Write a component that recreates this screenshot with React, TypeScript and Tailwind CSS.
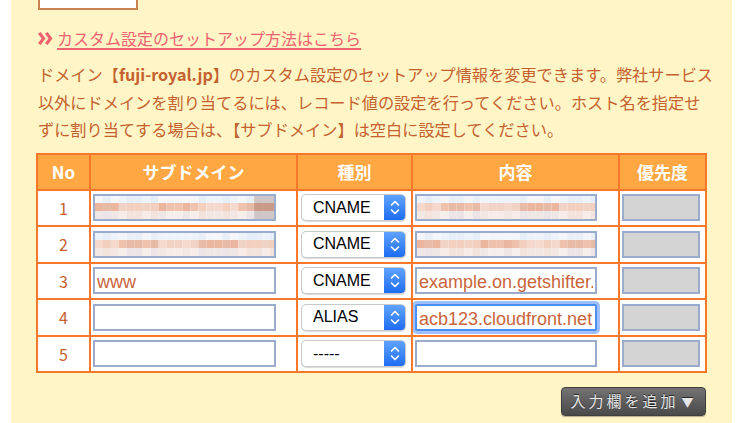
import React from "react";

const JP = { fontFamily: '"Noto Sans CJK JP", "Noto Sans", sans-serif' };

// pixelated (mosaic) blur used for the hidden values in rows 1 and 2
const mosaicColors = [
  ["#eef2fa", "#f3f5fb", "#e6eef9", "#f4f6fc", "#edf3fb", "#e9eef7"],
  ["#efc2ae", "#f3cfbf", "#eab6a0", "#f1d3c6", "#e8bba6", "#f4d9cc"],
  ["#f3e3dd", "#efe6e6", "#f7ece8", "#ece4e6", "#f2e7e2", "#f6eeea"],
];

function Mosaic({ seed, dark }: { seed: number; dark?: boolean }) {
  const cols = 23;
  const cells: React.ReactNode[] = [];
  for (let r = 0; r < 3; r++) {
    for (let c = 0; c < cols; c++) {
      let fill = mosaicColors[r][(c * 7 + seed * 3 + r * 5 + ((c * c) % 5)) % 6];
      if (dark && c >= cols - 3) fill = r === 1 ? "#c99a86" : "#cfc7c7";
      cells.push(<rect key={`${r}-${c}`} x={c * 8} y={r * 8 - 1} width={8} height={8} fill={fill} />);
    }
  }
  return (
    <svg width="100%" height="100%" viewBox="0 0 180 23" preserveAspectRatio="none" className="block">
      {cells}
    </svg>
  );
}

function TextBox({ value, focused, blur, seed, dark, width }: { value?: string; focused?: boolean; blur?: boolean; seed?: number; dark?: boolean; width: string }) {
  return (
    <div
      className={`${width} h-[27px] bg-white border-2 overflow-hidden ${
        focused ? "border-[#4b8ef5] shadow-[0_0_0_3px_rgba(80,140,250,0.55)] rounded-[2px]" : "border-[#9aabcb]"
      }`}
    >
      {blur ? (
        <Mosaic seed={seed ?? 0} dark={dark} />
      ) : (
        <input
          readOnly
          defaultValue={value}
          className="w-full h-full px-[2px] bg-transparent outline-none text-[18px] text-[#c9643a] leading-none"
          style={{ fontFamily: '"Liberation Sans", Arial, sans-serif' }}
        />
      )}
    </div>
  );
}

function SelectBox({ label }: { label: string }) {
  return (
    <div className="flex w-[105px] h-[27px] rounded-[5px] border border-[#c9c9c9] bg-white shadow-[0_1px_1px_rgba(0,0,0,0.15)] overflow-hidden">
      <div
        className="flex-1 flex items-center pl-[11px] text-[16px] text-black"
        style={{ fontFamily: '"Liberation Sans", Arial, sans-serif' }}
      >
        {label}
      </div>
      <div className="w-[21px] flex items-center justify-center bg-gradient-to-b from-[#5fa3ff] to-[#1c6cf2]">
        <svg width="10" height="17" viewBox="0 0 10 17" fill="none" stroke="white" strokeWidth="1.6" strokeLinecap="round" strokeLinejoin="round">
          <path d="M1.5 6 L5 2.5 L8.5 6" />
          <path d="M1.5 11 L5 14.5 L8.5 11" />
        </svg>
      </div>
    </div>
  );
}

const rows = [
  { no: 1, sub: { blur: true, seed: 1, dark: true }, type: "CNAME", content: { blur: true, seed: 4 } },
  { no: 2, sub: { blur: true, seed: 2 }, type: "CNAME", content: { blur: true, seed: 5 } },
  { no: 3, sub: { value: "www" }, type: "CNAME", content: { value: "example.on.getshifter.net" } },
  { no: 4, sub: { value: "" }, type: "ALIAS", content: { value: "acb123.cloudfront.net", focused: true } },
  { no: 5, sub: { value: "" }, type: "-----", content: { value: "" } },
];

export default function App() {
  return (
    <div className="w-[740px] h-[423px] bg-white overflow-hidden" style={JP}>
      <div className="ml-[11px] w-[721px] h-full bg-[#fff5c6] pl-[27px] pr-[26px] pt-0">
        {/* box cut off at the top edge */}
        <div className="w-[100px] h-[10px] border-2 border-t-0 border-[#c98252] bg-white" />

        <a className="mt-[18px] flex items-center text-[16px] leading-[20px] text-[#ee6370]">
          <svg width="15" height="13" viewBox="0 0 14 12" className="mr-[4px]" fill="#f0606e">
            <path d="M0 1.5 L2.5 0 L7 6 L2.5 12 L0 10.5 L3.3 6 Z" />
            <path d="M6.5 1.5 L9 0 L13.5 6 L9 12 L6.5 10.5 L9.8 6 Z" />
          </svg>
          <span className="underline decoration-[1.5px] underline-offset-[3px]">カスタム設定のセットアップ方法はこちら</span>
        </a>

        <p className="mt-[13px] text-[16.2px] leading-[27.5px] text-[#c4622f] whitespace-nowrap">
          ドメイン【<b className="font-bold">fuji-royal.jp</b>】のカスタム設定のセットアップ情報を変更できます。弊社サービス
          <br />
          以外にドメインを割り当てるには、レコード値の設定を行ってください。ホスト名を指定せ
          <br />
          ずに割り当てする場合は、【サブドメイン】は空白に設定してください。
        </p>

        <table className="mt-[9px] -ml-[2px] w-[669px] border-collapse border-2 border-[#f7772b] table-fixed">
          <colgroup>
            <col className="w-[53px]" />
            <col className="w-[207px]" />
            <col className="w-[115px]" />
            <col className="w-[207px]" />
            <col className="w-[87px]" />
          </colgroup>
          <thead>
            <tr className="bg-[#ffa743] text-white text-[17px] font-bold">
              <th className="h-[36px] border-2 border-[#f7772b]">No</th>
              <th className="border-2 border-[#f7772b]">サブドメイン</th>
              <th className="border-2 border-[#f7772b]">種別</th>
              <th className="border-2 border-[#f7772b]">内容</th>
              <th className="border-2 border-[#f7772b]">優先度</th>
            </tr>
          </thead>
          <tbody className="bg-white">
            {rows.map((r) => (
              <tr key={r.no}>
                <td className="h-[36.5px] border-2 border-[#f7772b] text-center text-[16px] text-[#c4622f]">{r.no}</td>
                <td className="border-2 border-[#f7772b] pl-[2px]">
                  <TextBox width="w-[183px]" {...r.sub} />
                </td>
                <td className="border-2 border-[#f7772b] pl-[3px]">
                  <SelectBox label={r.type} />
                </td>
                <td className="border-2 border-[#f7772b] pl-[2px]">
                  <TextBox width="w-[182px]" {...r.content} />
                </td>
                <td className="border-2 border-[#f7772b] pl-[2px]">
                  <div className="w-[78px] h-[27px] bg-[#d4d4d4] border-2 border-[#9aabcb]" />
                </td>
              </tr>
            ))}
          </tbody>
        </table>

        <div className="mt-[14px] flex justify-end w-[668px]">
          <button className="h-[29px] w-[145px] flex items-center justify-center rounded-[4px] border border-[#3f3f3f] bg-gradient-to-b from-[#737373] to-[#4a4a4a] text-[#e6e6e6] text-[15px] tracking-[3px] [text-shadow:0_-1px_0_rgba(0,0,0,0.6)] shadow-[0_1px_1px_rgba(0,0,0,0.3)]">
            入力欄を追加<span className="ml-[3px] text-[12px]">▼</span>
          </button>
        </div>
      </div>
    </div>
  );
}
